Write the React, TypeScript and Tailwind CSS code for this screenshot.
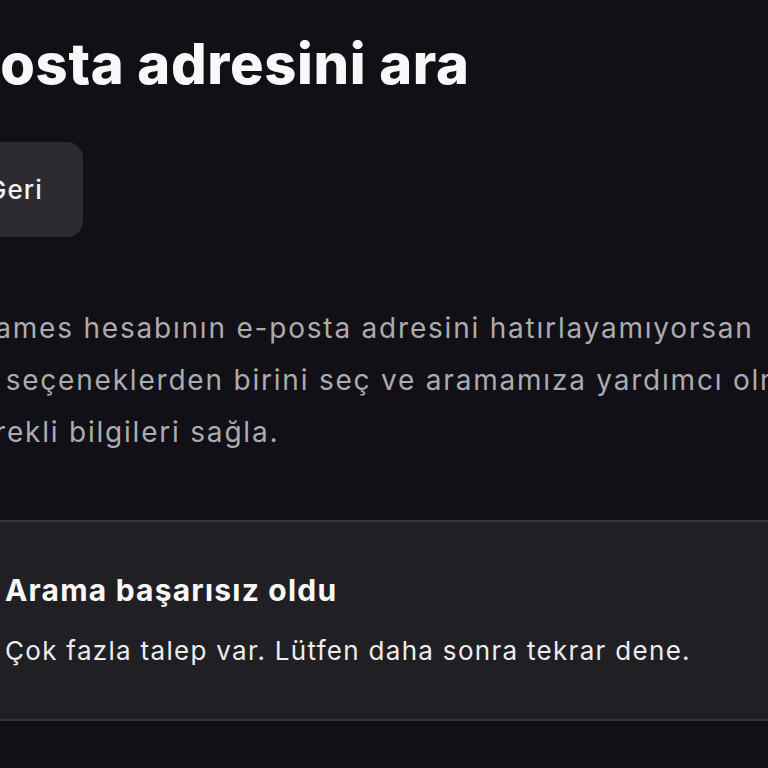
import { ArrowLeft, CircleAlert } from "lucide-react";

export default function App() {
  return (
    <div
      className="min-h-screen w-full overflow-hidden bg-[#111016] text-white"
      style={{ fontFamily: "Inter, 'Noto Sans', sans-serif" }}
    >
      <main className="-ml-[95px] flex w-[1000px] flex-col pt-[34px]">
        <h1 className="-ml-[3px] whitespace-nowrap text-[56px] font-extrabold leading-[60px] tracking-[0.012em] text-[#f8f8f9]">
          E-posta adresini ara
        </h1>

        <div className="mt-[48px]">
          <button className="flex h-[95px] items-center gap-3 rounded-2xl bg-[#2c2b30] pl-[42px] pr-[40px] text-[26px] font-medium tracking-[0.04em] text-[#f4f4f5]">
            <ArrowLeft className="h-7 w-7" strokeWidth={2.5} />
            Geri
          </button>
        </div>

        <p className="mt-[65px] whitespace-nowrap text-[28px] leading-[52px] tracking-[0.064em] text-[#ababb0]">
          <span className="block">Riot Games hesabının e-posta adresini hatırlayamıyorsan</span>
          <span className="ml-[6px] block">lütfen seçeneklerden birini seç ve aramamıza yardımcı olmak</span>
          <span className="-ml-[10px] block">için gerekli bilgileri sağla.</span>
        </p>

        <section className="mt-[62px] flex gap-6 rounded-2xl border-y-2 border-[#34333a] bg-[#202024] pb-[52px] pl-[44px] pt-[50px]">
          <CircleAlert className="mt-1 h-8 w-8 text-[#f87171]" />
          <div>
            <p className="text-[30px] font-bold leading-9 tracking-[0.04em] text-[#f8f8f9]">Arama başarısız oldu</p>
            <p className="mt-[27px] text-[26px] leading-8 tracking-[0.05em] text-[#ececee]">
              Çok fazla talep var. Lütfen daha sonra tekrar dene.
            </p>
          </div>
        </section>
      </main>
    </div>
  );
}
